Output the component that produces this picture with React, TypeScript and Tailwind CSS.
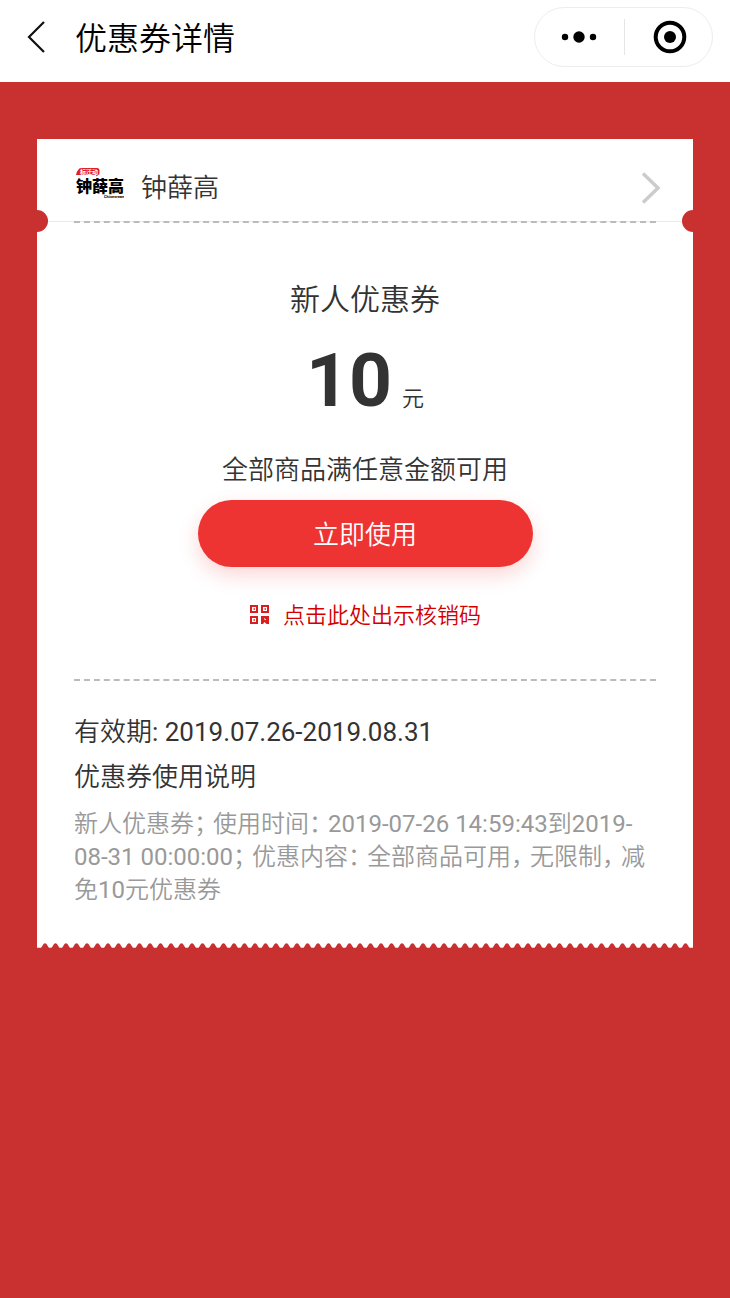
import React from "react";

const TOOTH_GAP = 21;

function BrandLogo() {
  return (
    <svg className="mb-2 h-8 w-12 shrink-0" viewBox="0 0 48 32" role="img" aria-label="钟薛高">
      <path d="M2.500 1.500Q3 0 5 0H21Q23.500 0 23.500 2.500V5Q23.500 7 22 7L20.500 8.500L20 7H0Q0.500 3.500 2.500 1.500Z" fill="#e01f28" />
      <text x="4" y="6" fontSize="6" fontWeight="700" fill="#fff">标迁动</text>
      <text x="0" y="24" fontSize="16" fontWeight="900" fill="#000">钟薛高</text>
      <text x="28" y="30" fontSize="4" fontWeight="700" fill="#000">Chicecream</text>
    </svg>
  );
}

function QrIcon() {
  return (
    <svg className="mb-1 h-5 w-5 shrink-0" viewBox="0 0 20 20" fill="none" stroke="#d81e1e" strokeWidth="2" aria-hidden="true">
      <path d="M2 2h6v6H2zM13 2h6v6h-6zM2 13h6v6H2z" />
      <path d="M4.500 5h1.500M15.500 5h1.500M4.500 16h1.500" strokeWidth="1.500" />
      <path d="M12 12h8v8h-2.500l-2-2l-1.500 2h-2z" fill="#d81e1e" stroke="none" />
      <path d="M15 14.500l2 1.500" stroke="#fff" strokeWidth="1" />
    </svg>
  );
}

function TornEdge() {
  const teeth = Array.from({ length: 62 }, (_, i) => 16 + i * TOOTH_GAP);

  return (
    <svg className="block h-[5px] w-full" viewBox="0 0 1312 10" preserveAspectRatio="none" aria-hidden="true">
      {teeth.map((x) => (
        <path key={x} d={`M${x - 8} 10L${x - 3} 2Q${x} -1 ${x + 3} 2L${x + 8} 10Z`} fill="#c93030" />
      ))}
      <path d="M0 9H1312V10H0Z" fill="#c93030" opacity="0.5" />
    </svg>
  );
}

// Full-width marks set on a narrower advance
function Mark({ children }: { children: string }) {
  return <span className="mr-[7px] [font-feature-settings:'halt']">{children}</span>;
}

export default function App() {
  return (
    <div
      lang="zh-CN"
      className="flex min-h-screen flex-col bg-[#c93030] font-['Roboto','Noto_Sans_CJK_SC',sans-serif] text-[#333333]"
    >
      <header className="flex h-[82px] items-center bg-white pr-[17px] pb-2 pl-6 text-black">
        <button type="button" aria-label="返回" className="flex h-10 w-6 items-center justify-center">
          <svg className="h-8 w-6" viewBox="0 0 24 32" fill="none" stroke="#111" strokeWidth="2.200">
            <path d="M20 1L5 16L20 31" />
          </svg>
        </button>
        <h1 className="ml-[27px] pt-1 text-[32px] leading-10 font-[350]">优惠券详情</h1>

        <div className="ml-auto flex h-[60px] w-[179px] items-center rounded-full border border-[#ededed]">
          <button type="button" aria-label="更多" className="flex h-full w-1/2 items-center justify-center">
            <svg className="h-3 w-9" viewBox="0 0 36 12" fill="#000">
              <circle cx="4" cy="6" r="3.200" />
              <circle cx="18" cy="6" r="5.700" />
              <circle cx="32" cy="6" r="3.200" />
            </svg>
          </button>
          <span className="h-9 w-px bg-[#e5e5e5]" />
          <button type="button" aria-label="关闭" className="flex h-full flex-1 items-center justify-center pl-1">
            <svg className="h-[34px] w-[34px]" viewBox="0 0 34 34">
              <circle cx="17" cy="17" r="14.300" fill="none" stroke="#000" strokeWidth="4" />
              <circle cx="17" cy="17" r="6" fill="#000" />
            </svg>
          </button>
        </div>
      </header>

      <main className="px-[37px] pt-[57px] pb-16">
        <article className="bg-white">
          <div className="relative">
            <a href="#shop" className="flex h-[82px] items-center pt-[15px] pr-8 pl-[39px]">
              <BrandLogo />
              <span className="ml-[17px] text-[26px] leading-10 font-[350]">钟薛高</span>
              <svg className="ml-auto h-8 w-5" viewBox="0 0 20 32" fill="none" stroke="#cccccc" strokeWidth="3.500">
                <path d="M2 1.500L17 16L2 30.500" />
              </svg>
            </a>
            <div className="border-t border-[#f6e3e3]" />
            <span className="absolute -bottom-2.5 -left-[11px] h-[22px] w-[22px] rounded-full bg-[#c93030]" />
            <span className="absolute -right-[11px] -bottom-2.5 h-[22px] w-[22px] rounded-full bg-[#c93030]" />
          </div>

          <div className="mx-[37px]">
            <section className="relative -mt-px flex flex-col items-center border-y-2 border-dashed border-[#bbbbbb] pt-[57px] pb-[43px]">
              <h2 className="text-[30px] leading-10 font-[350]">新人优惠券</h2>
              <p className="mt-[22px] flex items-baseline gap-2.5">
                <strong className="text-[75px] leading-[76px] font-bold">10</strong>
                <span className="text-[22px] leading-6 font-[350]">元</span>
              </p>
              <p className="mt-8 text-[26px] leading-10 font-[350]">全部商品满任意金额可用</p>
              <button
                type="button"
                className="mt-2.5 h-[67px] w-[335px] rounded-full bg-[#ee3333] pt-1 text-[26px] font-[350] text-white shadow-[0_8px_20px_rgba(238,51,51,0.2)]"
              >
                立即使用
              </button>
              <button type="button" className="mt-[29px] flex items-center gap-3.5 text-[22px] leading-10 font-[350] text-[#d40000]">
                <QrIcon />
                点击此处出示核销码
              </button>
            </section>

            <section className="pt-[29px] pb-9">
              <p className="text-[26px] leading-[45px]">
                <span className="font-[350]">有效期</span>: 2019.07.26-2019.08.31
              </p>
              <h3 className="text-[26px] leading-[45px] font-[350]">优惠券使用说明</h3>
              <p className="mt-2 text-[24px] leading-[33px] text-[#999999]">
                <span className="font-[350]">新人优惠券<Mark>；</Mark>使用时间<Mark>：</Mark></span>
                2019-07-26 14:59:43
                <span className="font-[350]">到</span>2019-08-31 00:00:00
                <span className="font-[350]">
                  <Mark>；</Mark>优惠内容<Mark>：</Mark>全部商品可用<Mark>，</Mark>无限制<Mark>，</Mark>减免
                </span>
                10<span className="font-[350]">元优惠券</span>
              </p>
            </section>
          </div>
          <TornEdge />
        </article>
      </main>
    </div>
  );
}
